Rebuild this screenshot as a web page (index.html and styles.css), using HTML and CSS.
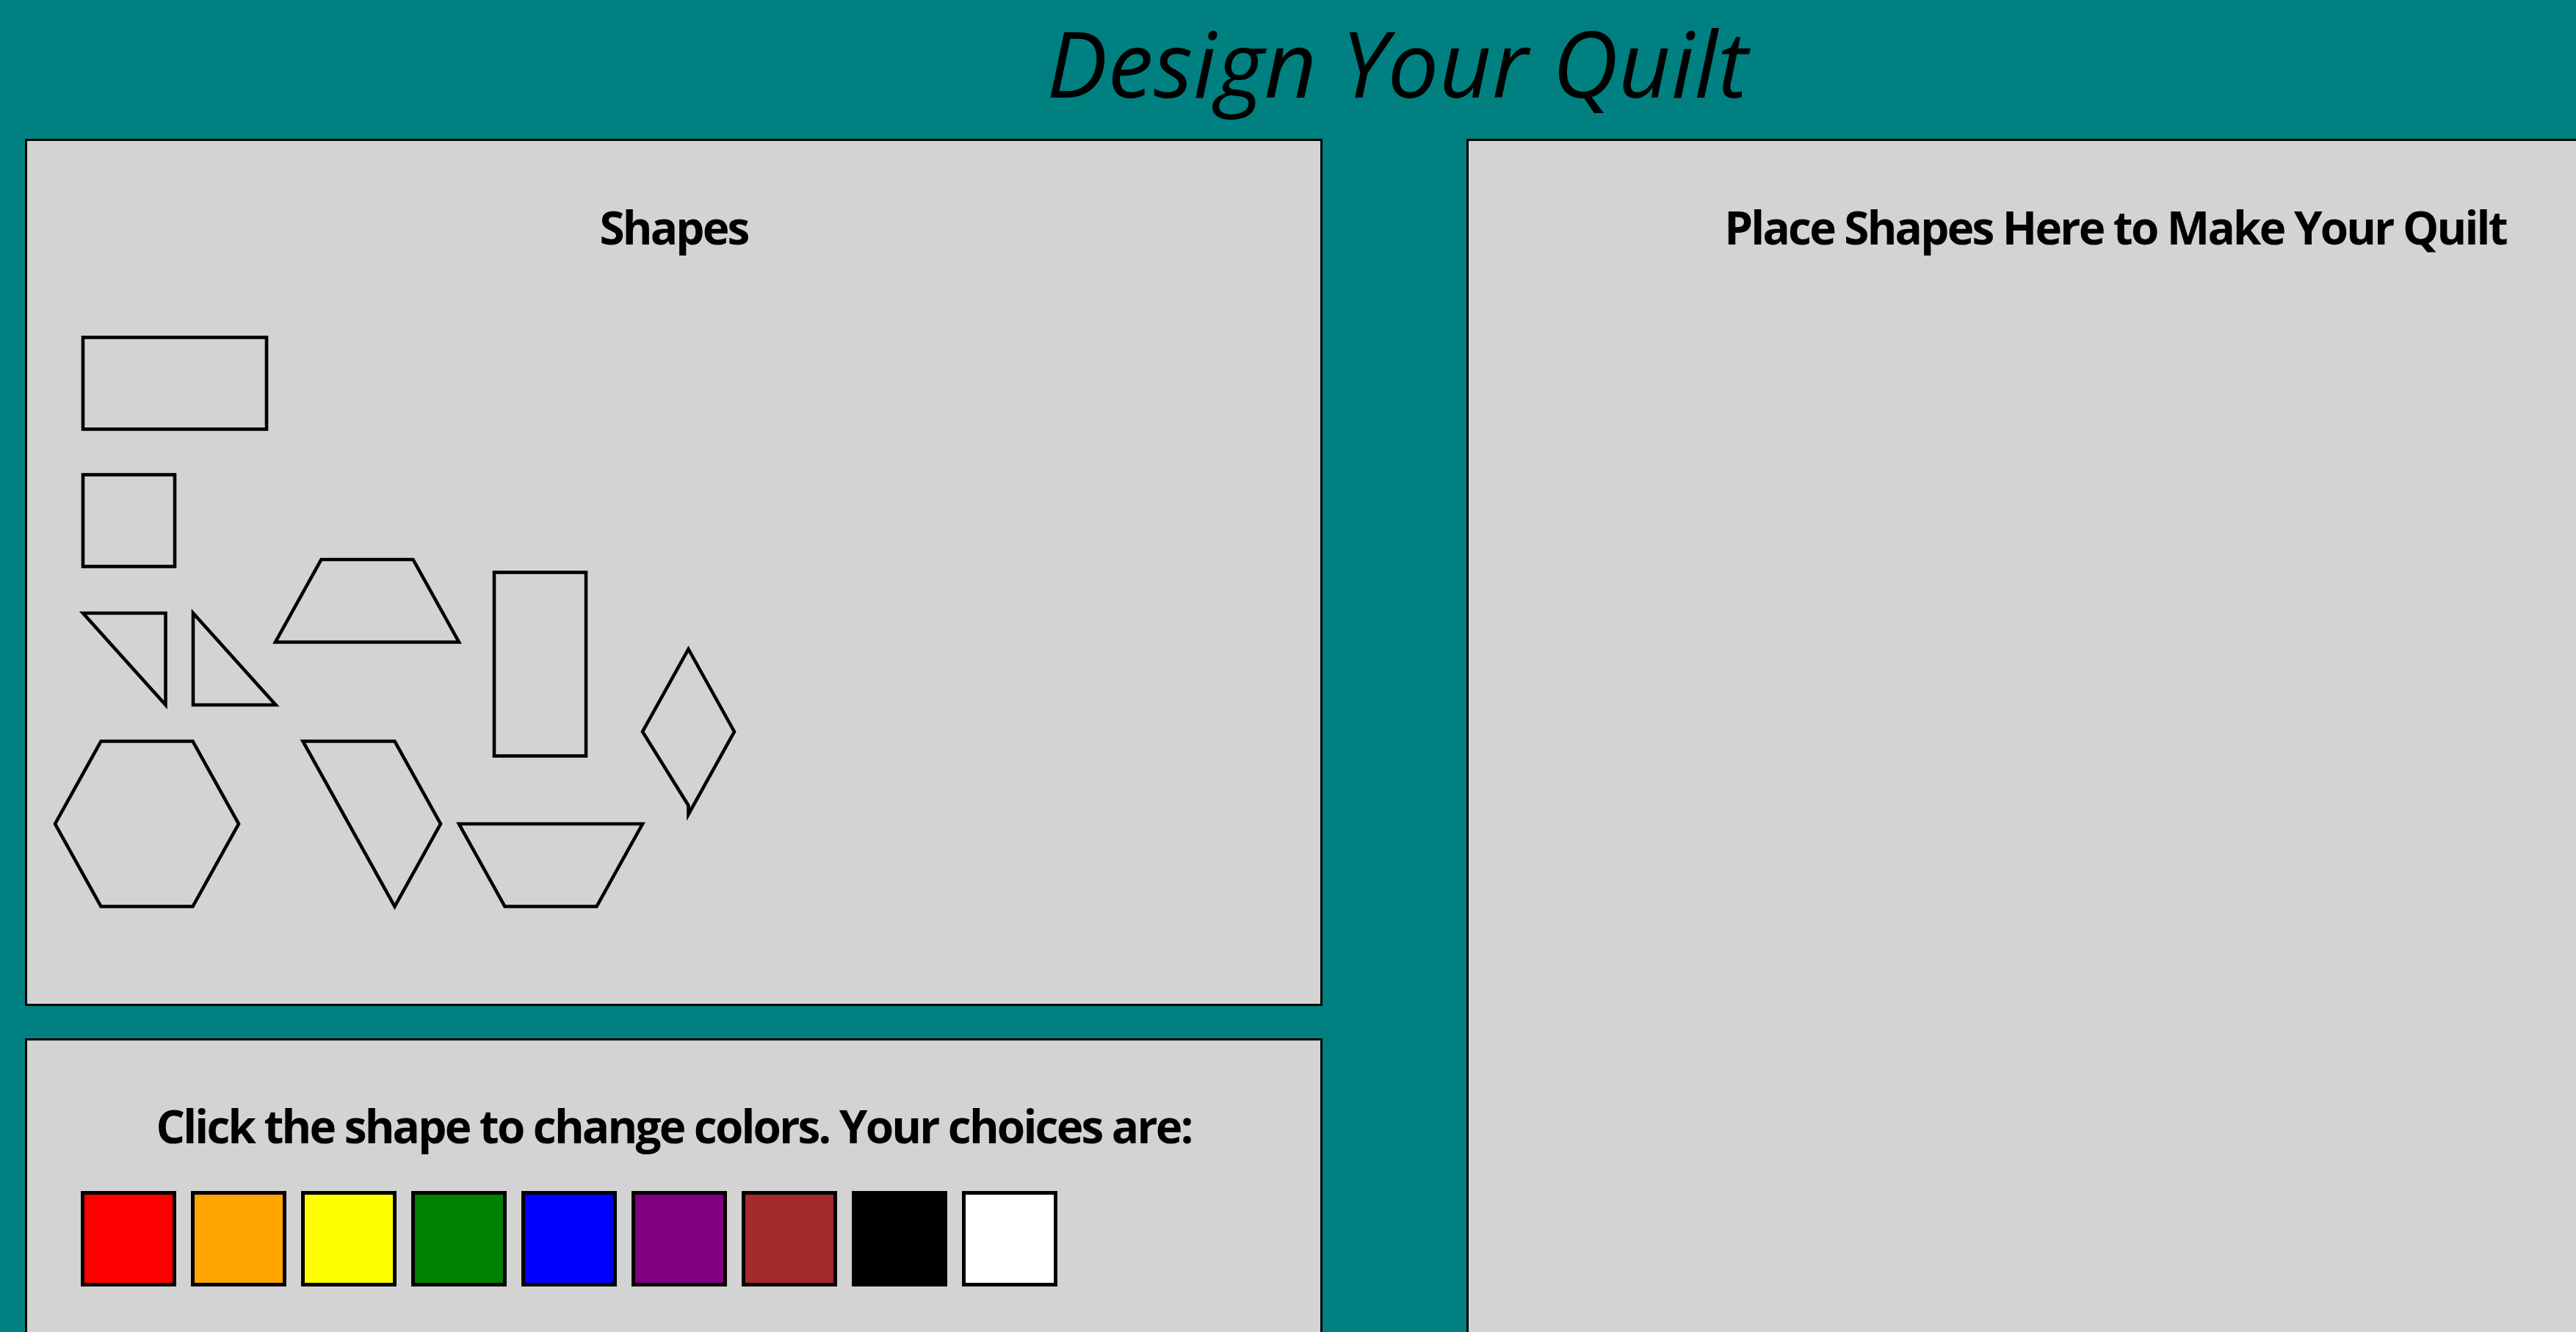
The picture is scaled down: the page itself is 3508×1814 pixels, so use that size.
FILE: index.html
```html
<!DOCTYPE html>
<html lang="en">
<head>
<meta charset="utf-8">
<title>Design Your Quilt</title>
<link rel="stylesheet" href="styles.css">
</head>
<body>
<div class="page">
  <h1 class="title">Design Your Quilt</h1>
  <div class="board">
    <div class="left-col">
      <section class="panel shapes-panel">
        <h2 class="panel-heading">Shapes</h2>
        <svg class="shape-canvas" viewBox="37 400 1761 967" width="1761" height="967" xmlns="http://www.w3.org/2000/svg">
          <g class="piece">
            <rect x="113" y="459.5" width="250" height="125"/>
            <rect x="113" y="646.5" width="125" height="125"/>
            <polygon points="113,835 225.5,835 225.5,960"/>
            <polygon points="263,835 263,960 375.5,960"/>
            <polygon points="437.5,762 562.5,762 625,874.5 375,874.5"/>
            <rect x="673" y="779.5" width="125" height="250"/>
            <polygon points="937.5,884 1000,996.5 937.5,1109 937.5,1097 875,996.5"/>
            <polygon points="137.5,1009.5 262.5,1009.5 325,1122 262.5,1234.5 137.5,1234.5 75,1122"/>
            <polygon points="412.5,1009.5 537.5,1009.5 600,1122 537.5,1234.5"/>
            <polygon points="625,1122 875,1122 812.5,1234.5 687.5,1234.5"/>
          </g>
        </svg>
      </section>
      <section class="panel colors-panel">
        <h2 class="panel-heading colors-heading">Click the shape to change colors. Your choices are:</h2>
        <div class="swatches">
          <div class="swatch red"></div>
          <div class="swatch orange"></div>
          <div class="swatch yellow"></div>
          <div class="swatch green"></div>
          <div class="swatch blue"></div>
          <div class="swatch purple"></div>
          <div class="swatch brown"></div>
          <div class="swatch black"></div>
          <div class="swatch white"></div>
        </div>
      </section>
    </div>
    <section class="panel quilt-panel">
      <h2 class="panel-heading">Place Shapes Here to Make Your Quilt</h2>
    </section>
  </div>
</div>
</body>
</html>
```
FILE: styles.css
```css
html, body {
  margin: 0;
  padding: 0;
  overflow: hidden;
  background: #008080;
}

.page {
  width: 3806px;
  box-sizing: border-box;
  padding: 0 34px;
  font-family: "Open Sans", "Noto Sans", sans-serif;
  color: #000;
}

.title {
  width: fit-content;
  margin: 0 auto;
  line-height: 170px;
  font-size: 124px;
  font-style: italic;
  font-weight: 400;
  letter-spacing: 0.5px;
}

.board {
  margin-top: 19px;
  display: grid;
  grid-template-columns: 1767px 1767px;
  column-gap: 196px;
  align-items: stretch;
}

.left-col {
  display: flex;
  flex-direction: column;
  gap: 44px;
}

.panel {
  background: #d3d3d3;
  border: 3px solid #000;
  box-sizing: border-box;
}

.panel-heading {
  margin: 75px 0 0;
  font-size: 62px;
  line-height: 84px;
  font-weight: 700;
  text-align: center;
  letter-spacing: -2.8px;
}

.shape-canvas {
  display: block;
  margin-top: 49px;
}

.piece rect,
.piece polygon {
  fill: none;
  stroke: #000;
  stroke-width: 4.6;
}

.colors-panel {
  padding-bottom: 200px;
}

.colors-heading {
  margin-top: 74px;
}

.swatches {
  display: flex;
  gap: 20px;
  margin: 47px 0 0 73px;
}

.swatch {
  width: 130px;
  height: 130px;
  box-sizing: border-box;
  border: 5px solid #000;
}

.red { background: #ff0000; }
.orange { background: #ffa500; }
.yellow { background: #ffff00; }
.green { background: #008000; }
.blue { background: #0000ff; }
.purple { background: #800080; }
.brown { background: #a52a2a; }
.black { background: #000000; }
.white { background: #ffffff; }
```
